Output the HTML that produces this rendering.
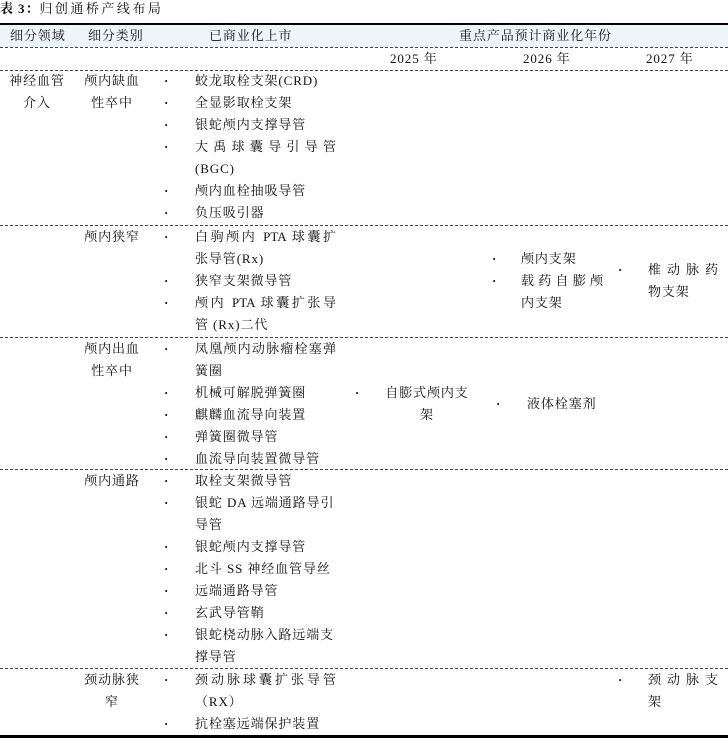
<!DOCTYPE html>
<html><head><meta charset="utf-8"><style>
body{margin:0;width:728px;height:738px;background:#fff;position:relative;overflow:hidden;font-family:"Liberation Serif","Noto Serif CJK SC",serif;font-size:13px;color:#111}
.a{position:absolute;line-height:22px;white-space:nowrap;letter-spacing:0.9px}
.j{text-align:justify;text-align-last:justify;letter-spacing:0}
.c{text-align:center}
.hl{position:absolute;left:0;width:728px;border-top:1px dashed #444}
.b{position:absolute;width:4px;text-align:center;line-height:22px;font-weight:bold}
</style></head><body>
<div class="a" style="left:0;top:-2px;font-weight:bold">表 3：<span style="font-weight:normal;letter-spacing:2.5px">归创通桥产线布局</span></div>
<div style="position:absolute;left:0;top:23px;width:728px;height:2px;background:#000"></div>
<div style="position:absolute;left:0;top:25px;width:728px;height:22px;background:#eef5f9"></div>
<div class="a" style="left:10px;top:25px">细分领域</div>
<div class="a" style="left:88px;top:25px">细分类别</div>
<div class="a" style="left:209px;top:25px">已商业化上市</div>
<div class="a" style="left:459px;top:25px">重点产品预计商业化年份</div>
<div class="hl" style="top:47px"></div>
<div class="a" style="left:390px;top:48px">2025 年</div>
<div class="a" style="left:523px;top:48px">2026 年</div>
<div class="a" style="left:646px;top:48px">2027 年</div>
<div class="hl" style="top:70px"></div>

<div class="a c" style="left:0;width:74px;top:70px">神经血管<br>介入</div>
<div class="a c" style="left:76px;width:72px;top:70px">颅内缺血<br>性卒中</div>
<div class="b" style="left:164px;top:70px">·<br>·<br>·<br>·<br><br>·<br>·</div>
<div class="a" style="left:195px;top:70px">蛟龙取栓支架(CRD)<br>全显影取栓支架<br>银蛇颅内支撑导管<br><div class="j" style="width:141px">大禹球囊导引导管</div>(BGC)<br>颅内血栓抽吸导管<br>负压吸引器</div>
<div class="hl" style="top:225px"></div>

<div class="a c" style="left:76px;width:72px;top:226px">颅内狭窄</div>
<div class="b" style="left:164px;top:226px">·<br><br>·<br>·</div>
<div class="a" style="left:195px;top:226px"><div class="j" style="width:141px">白驹颅内 PTA 球囊扩</div>张导管(Rx)<br>狭窄支架微导管<br><div class="j" style="width:141px">颅内 PTA 球囊扩张导</div>管 (Rx)二代</div>
<div class="b" style="left:492px;top:248px">·<br>·</div>
<div class="a" style="left:521px;top:248px">颅内支架<br><div class="j" style="width:82px">载药自膨颅</div>内支架</div>
<div class="b" style="left:618px;top:259px">·</div>
<div class="a" style="left:648px;top:259px"><div class="j" style="width:70px">椎动脉药</div>物支架</div>
<div class="hl" style="top:337px"></div>

<div class="a c" style="left:76px;width:72px;top:338px">颅内出血<br>性卒中</div>
<div class="b" style="left:164px;top:338px">·<br><br>·<br>·<br>·<br>·</div>
<div class="a" style="left:195px;top:338px"><div class="j" style="width:141px">凤凰颅内动脉瘤栓塞弹</div>簧圈<br>机械可解脱弹簧圈<br>麒麟血流导向装置<br>弹簧圈微导管<br>血流导向装置微导管</div>
<div class="b" style="left:355px;top:382px">·</div>
<div class="a c" style="left:380px;width:94px;top:382px">自膨式颅内支<br>架</div>
<div class="b" style="left:496px;top:393px">·</div>
<div class="a" style="left:527px;top:393px">液体栓塞剂</div>
<div class="hl" style="top:469px"></div>

<div class="a c" style="left:76px;width:72px;top:470px">颅内通路</div>
<div class="b" style="left:164px;top:470px">·<br>·<br><br>·<br>·<br>·<br>·<br>·</div>
<div class="a" style="left:195px;top:470px">取栓支架微导管<br>银蛇 DA 远端通路导引<br>导管<br>银蛇颅内支撑导管<br>北斗 SS 神经血管导丝<br>远端通路导管<br>玄武导管鞘<br>银蛇桡动脉入路远端支<br>撑导管</div>
<div class="hl" style="top:668px"></div>

<div class="a c" style="left:76px;width:72px;top:669px">颈动脉狭<br>窄</div>
<div class="b" style="left:164px;top:669px">·<br><br>·</div>
<div class="a" style="left:195px;top:669px"><div class="j" style="width:141px">颈动脉球囊扩张导管</div>（RX）<br>抗栓塞远端保护装置</div>
<div class="b" style="left:618px;top:669px">·</div>
<div class="a" style="left:648px;top:669px"><div class="j" style="width:70px">颈动脉支</div>架</div>
<div style="position:absolute;left:0;top:735px;width:728px;height:3px;background:#000"></div>
</body></html>
